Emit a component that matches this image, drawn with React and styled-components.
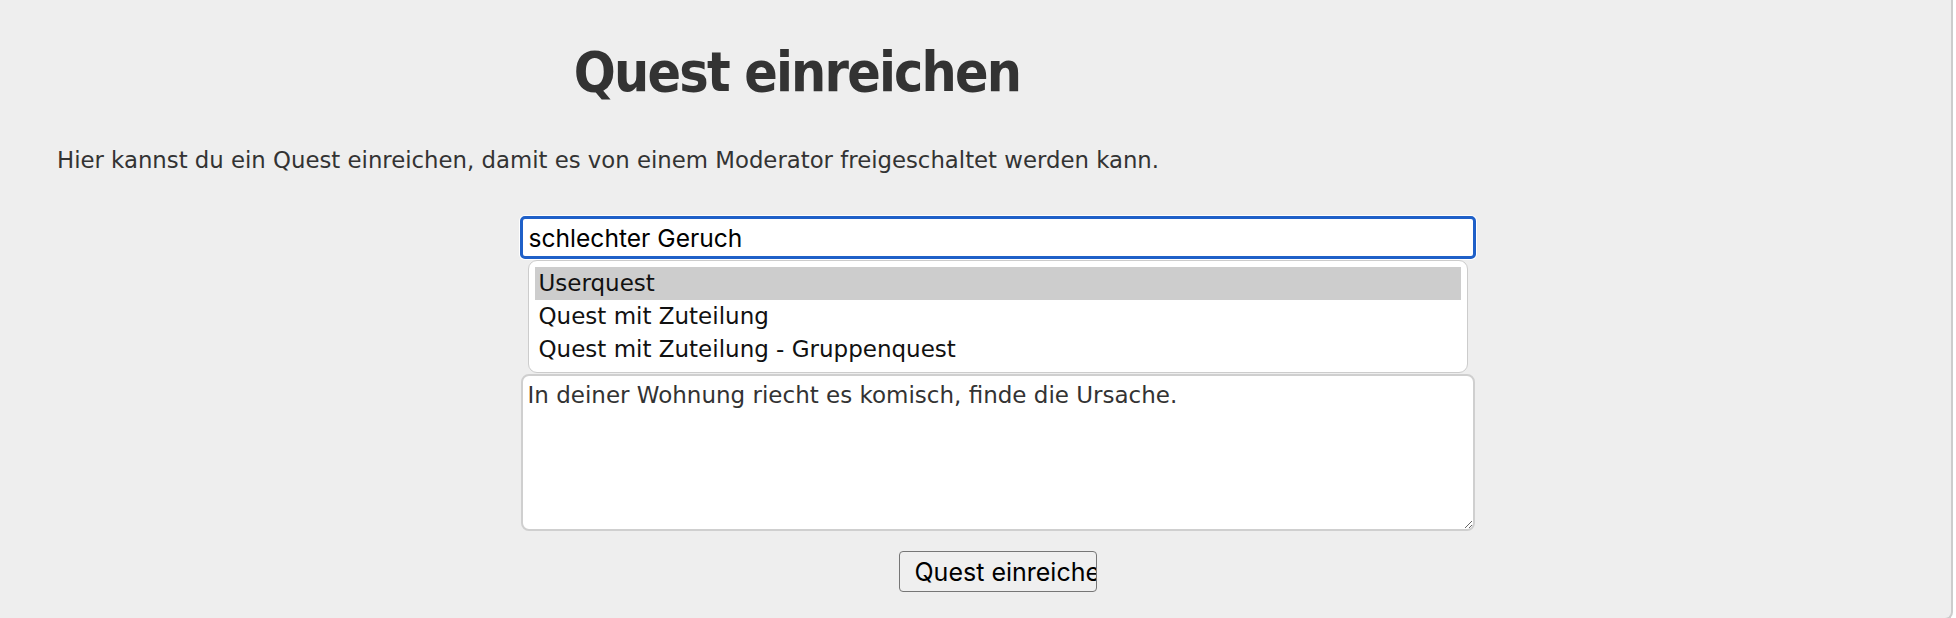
import React from "react";
import styled, { createGlobalStyle } from "styled-components";

const Global = createGlobalStyle`
  html, body { margin: 0; padding: 0; background: #fff; }
  body { font-family: "DejaVu Sans", sans-serif; overflow: hidden; }
  * { box-sizing: border-box; }
`;

const Panel = styled.main`
  width: 1953px;
  height: 620px;
  background: #eeeeee;
  border-right: 2px solid #cccccc;
  border-bottom: 2px solid #cccccc;
  border-bottom-right-radius: 8px;
  padding-left: 44px;
`;

const Title = styled.h1`
  margin: 0;
  padding-top: 40px;
  width: 1506px;
  text-align: center;
  font-family: "DejaVu Sans Condensed", "DejaVu Sans", sans-serif;
  font-weight: 700;
  font-size: 55px;
  line-height: 64px;
  letter-spacing: -1.8px;
  color: #333333;
`;

const Intro = styled.p`
  margin: 43px 0 0 13px;
  font-family: "DejaVu Sans", sans-serif;
  font-size: 22.8px;
  line-height: 26px;
  color: #333333;
`;

const Form = styled.form`
  display: flex;
  flex-direction: column;
  align-items: center;
  margin-top: 43px;
`;

const TitleInput = styled.input`
  width: 956px;
  height: 43px;
  border: 3px solid #1f60c8;
  border-radius: 5px;
  box-shadow: 0 0 0 1px #ffffff;
  background: #ffffff;
  padding: 0 6px;
  font-family: Inter, "Liberation Sans", sans-serif;
  font-size: 24.6px;
  color: #000000;
  outline: none;
`;

const ListBox = styled.div`
  width: 940px;
  height: 113px;
  margin-top: 1px;
  background: #ffffff;
  border: 1px solid #cccccc;
  border-radius: 9px;
  padding: 6px 6px;
`;

const Option = styled.div`
  height: 33px;
  line-height: 33px;
  padding-left: 4px;
  font-family: "DejaVu Sans", sans-serif;
  font-size: 23px;
  color: #111111;
  background: ${(p) => (p.$selected ? "#cdcdcd" : "transparent")};
  white-space: nowrap;
`;

const Description = styled.textarea`
  width: 954px;
  height: 157px;
  margin-top: 1px;
  border: 2px solid #cfcfcf;
  border-radius: 8px;
  background: #ffffff;
  padding: 6px 5px 4px;
  font-family: "DejaVu Sans", sans-serif;
  font-size: 23px;
  line-height: 26px;
  color: #333333;
  resize: both;
  outline: none;
`;

const Submit = styled.button`
  display: flex;
  align-items: center;
  justify-content: flex-start;
  width: 198px;
  height: 41px;
  margin-top: 20px;
  padding: 0 0 0 15px;
  overflow: hidden;
  white-space: nowrap;
  background: #efefef;
  border: 1px solid #767676;
  border-radius: 4px;
  font-family: Inter, "Liberation Sans", sans-serif;
  font-size: 25px;
  color: #000000;
`;

const options = ["Userquest", "Quest mit Zuteilung", "Quest mit Zuteilung - Gruppenquest"];

export default function App() {
  return (
    <>
      <Global />
      <Panel>
        <Title>Quest einreichen</Title>
        <Intro>
          Hier kannst du ein Quest einreichen, damit es von einem Moderator freigeschaltet werden kann.
        </Intro>
        <Form onSubmit={(e) => e.preventDefault()}>
          <TitleInput type="text" defaultValue="schlechter Geruch" />
          <ListBox role="listbox">
            {options.map((o, i) => (
              <Option key={o} role="option" aria-selected={i === 0} $selected={i === 0}>
                {o}
              </Option>
            ))}
          </ListBox>
          <Description defaultValue="In deiner Wohnung riecht es komisch, finde die Ursache." />
          <Submit type="submit">Quest einreichen</Submit>
        </Form>
      </Panel>
    </>
  );
}
